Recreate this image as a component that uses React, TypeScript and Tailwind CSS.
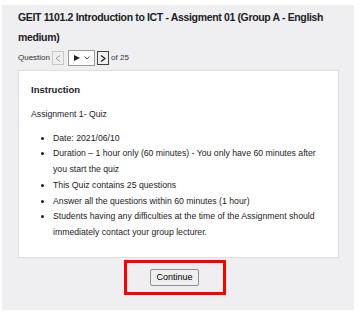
export default function App() {
  const items = [
    "Date: 2021/06/10",
    "Duration – 1 hour only (60 minutes) - You only have 60 minutes after you start the quiz",
    "This Quiz contains 25 questions",
    "Answer all the questions within 60 minutes (1 hour)",
    "Students having any difficulties at the time of the Assignment should immediately contact your group lecturer.",
  ];

  return (
    <div className="w-[358px] h-[315px] bg-white pl-[2px] pt-[5px] font-['Liberation_Sans',Arial,sans-serif] text-[#1d2125]">
      <div className="w-[352px] h-[305px] bg-[#efeff1] pl-[16px] pr-[15px] pt-[2px]">
        <h1 className="text-[10.5px] leading-[20px] font-bold tracking-[-0.35px]">
          GEIT 1101.2 Introduction to ICT - Assigment 01 (Group A - English medium)
        </h1>
        <div className="flex items-center h-[22px] text-[8px] text-[#333]">
          <span className="mr-[2px]">Question</span>
          <button className="w-[12px] h-[14px] border border-[#c8c8c8] bg-[#f0f0f0] flex items-center justify-center text-[#999]">
            <svg width="6" height="7" viewBox="0 0 6 7">
              <path d="M5 0.5 L1 3.5 L5 6.5" fill="none" stroke="#999" strokeWidth="1" />
            </svg>
          </button>
          <div className="ml-[4px] w-[27px] h-[16px] border border-[#999] bg-white flex items-center pl-[5px] gap-[4px]">
            <svg width="6" height="6" viewBox="0 0 6 6">
              <path d="M0 0 L6 3 L0 6 Z" fill="#222" />
            </svg>
            <svg width="6" height="4" viewBox="0 0 6 4">
              <path d="M0.5 0.5 L3 3 L5.5 0.5" fill="none" stroke="#444" strokeWidth="1" />
            </svg>
          </div>
          <button className="ml-[2px] w-[12px] h-[14px] border border-[#444] bg-[#f0f0f0] flex items-center justify-center">
            <svg width="6" height="7" viewBox="0 0 6 7">
              <path d="M1 0.5 L5 3.5 L1 6.5" fill="none" stroke="#222" strokeWidth="1.2" />
            </svg>
          </button>
          <span className="ml-[2px]">of 25</span>
        </div>
        <div className="mt-[1px] bg-white border border-[#dedee0] h-[188px] pl-[12px] pr-[10px] pt-[12px] text-[8.7px] leading-[15.7px]">
          <div className="font-bold text-[9.5px] leading-[14px]">Instruction</div>
          <p className="mt-[10px]">Assignment 1- Quiz</p>
          <ul className="mt-[8px] pl-[22px] list-disc">
            {items.map((t) => (
              <li key={t}>{t}</li>
            ))}
          </ul>
        </div>
        <div className="flex justify-center mt-[2px] mr-[8px]">
          <div className="w-[102px] h-[35px] border-[3px] border-[#ff0000] flex items-center justify-center">
            <button className="h-[17px] px-[5px] border border-[#8f8f8f] rounded-[2px] bg-[#efefef] text-[9px] leading-[15px] text-black">
              Continue
            </button>
          </div>
        </div>
      </div>
    </div>
  );
}
